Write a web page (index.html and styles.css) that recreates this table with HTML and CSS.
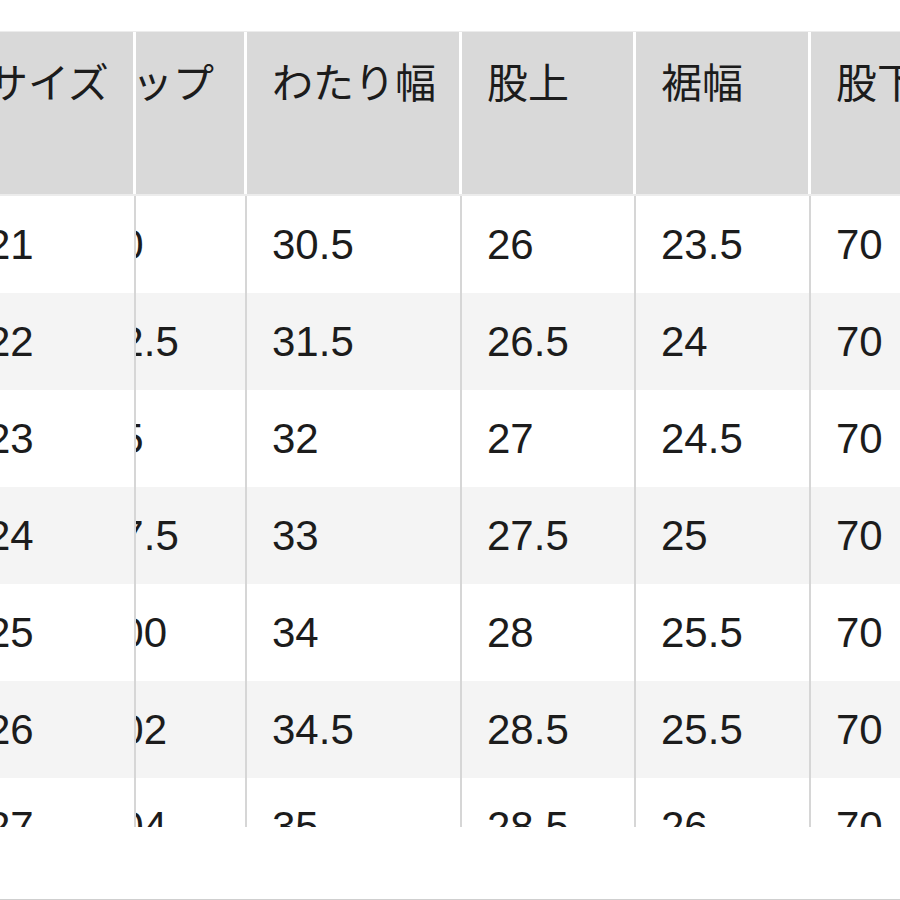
FILE: index.html
```html
<!DOCTYPE html>
<html lang="ja">
<head>
<meta charset="utf-8">
<title>サイズ表</title>
<link rel="stylesheet" href="styles.css">
</head>
<body>
<div class="page">
  <div class="sheet">
    <div class="table">
      <div class="row head">
        <div class="cell c1"><span>サイズ</span></div>
        <div class="cell c2"><span class="shift">ヒップ</span></div>
        <div class="cell c3"><span>わたり幅</span></div>
        <div class="cell c4"><span>股上</span></div>
        <div class="cell c5"><span>裾幅</span></div>
        <div class="cell c6"><span>股下</span></div>
      </div>
      <div class="row">
        <div class="cell c1">21</div><div class="cell c2"><span class="shift">90</span></div><div class="cell c3">30.5</div><div class="cell c4">26</div><div class="cell c5">23.5</div><div class="cell c6">70</div>
      </div>
      <div class="row alt">
        <div class="cell c1">22</div><div class="cell c2"><span class="shift">92.5</span></div><div class="cell c3">31.5</div><div class="cell c4">26.5</div><div class="cell c5">24</div><div class="cell c6">70</div>
      </div>
      <div class="row">
        <div class="cell c1">23</div><div class="cell c2"><span class="shift">95</span></div><div class="cell c3">32</div><div class="cell c4">27</div><div class="cell c5">24.5</div><div class="cell c6">70</div>
      </div>
      <div class="row alt">
        <div class="cell c1">24</div><div class="cell c2"><span class="shift">97.5</span></div><div class="cell c3">33</div><div class="cell c4">27.5</div><div class="cell c5">25</div><div class="cell c6">70</div>
      </div>
      <div class="row">
        <div class="cell c1">25</div><div class="cell c2"><span class="shift">100</span></div><div class="cell c3">34</div><div class="cell c4">28</div><div class="cell c5">25.5</div><div class="cell c6">70</div>
      </div>
      <div class="row alt">
        <div class="cell c1">26</div><div class="cell c2"><span class="shift">102</span></div><div class="cell c3">34.5</div><div class="cell c4">28.5</div><div class="cell c5">25.5</div><div class="cell c6">70</div>
      </div>
      <div class="row">
        <div class="cell c1">27</div><div class="cell c2"><span class="shift">104</span></div><div class="cell c3">35</div><div class="cell c4">28.5</div><div class="cell c5">26</div><div class="cell c6">70</div>
      </div>
    </div>
  </div>
  <div class="foot"></div>
</div>
</body>
</html>
```
FILE: styles.css
```css
html, body {
  margin: 0;
  padding: 0;
  background: #ffffff;
}

body {
  font-family: "Liberation Sans", "Noto Sans CJK JP", sans-serif;
  color: #1c1c1c;
  width: 900px;
  height: 900px;
  overflow: hidden;
}

.page {
  width: 900px;
  height: 900px;
  display: flex;
  flex-direction: column;
}

.sheet {
  margin-top: 31px;
  height: 795px;
  overflow: hidden;
  border-top: 1px solid #ececec;
}

.table {
  margin-left: -38px;
  width: 1000px;
}

.row {
  display: grid;
  grid-template-columns: 174px 111px 215px 174px 175px 151px;
  height: 97px;
  background: #ffffff;
}

.row.alt {
  background: #f4f4f4;
}

.cell {
  display: flex;
  align-items: center;
  padding-left: 25px;
  font-size: 42px;
  border-right: 2px solid #d6d6d6;
  overflow: hidden;
  white-space: nowrap;
}

.row.head {
  height: 162px;
  background: #ffffff;
  border-bottom: 2px solid #ececec;
}

.head .cell {
  align-items: flex-start;
  background: #d9d9d9;
  border-right: 3px solid #ffffff;
  font-family: "Noto Sans CJK JP", "Liberation Sans", sans-serif;
  font-size: 41px;
  line-height: 56px;
  padding-top: 20px;
}

.cell.c2 {
  padding-left: 0;
}

.shift {
  margin-left: -39px;
}

.head .shift {
  margin-left: -45px;
}

.foot {
  margin-top: auto;
  height: 1px;
  background: #cfcfcf;
  margin-bottom: 0;
}
```
